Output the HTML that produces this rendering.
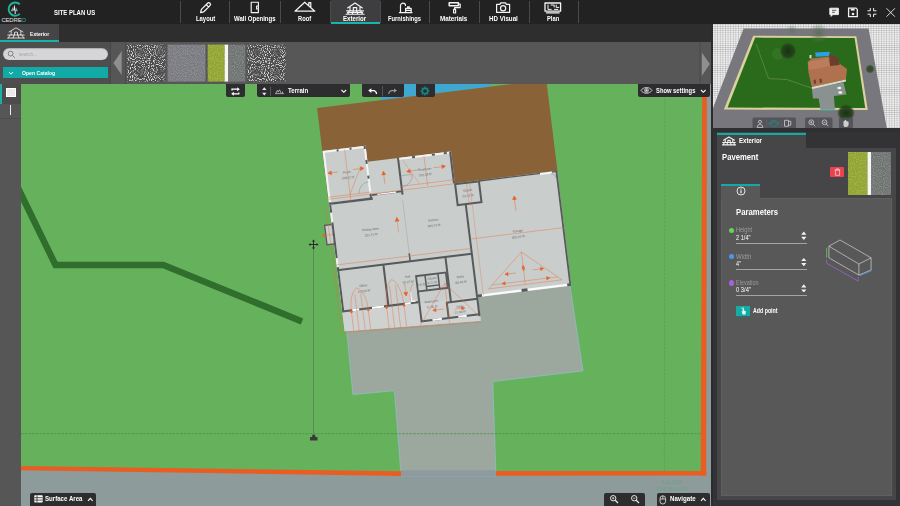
<!DOCTYPE html>
<html lang="en">
<head>
<meta charset="utf-8">
<title>Cedreo - Site Plan US</title>
<style>
html,body{margin:0;padding:0;}
body{width:900px;height:506px;overflow:hidden;background:#333;font-family:"Liberation Sans",sans-serif;color:#fff;position:relative;}
.abs{position:absolute;}
#topbar{left:0;top:0;width:900px;height:24px;background:#222222;}
#subbar{left:0;top:24px;width:713px;height:18px;background:#2e2e2e;}
#catbar{left:0;top:42px;width:713px;height:42px;background:#575757;}
#catleft{left:0;top:42px;width:110px;height:42px;background:#4e4e4e;}
.t{position:absolute;white-space:nowrap;font-weight:bold;line-height:1;}
.navtab{position:absolute;top:0;height:24px;width:50px;}
.navtab .lbl{position:absolute;left:-20px;right:-20px;top:14.5px;text-align:center;font-size:7.2px;font-weight:bold;line-height:8px;letter-spacing:-0.1px;}
.sep{position:absolute;top:1px;width:1px;height:22px;background:#4a4a4a;}
.btn{position:absolute;background:#2d2d2f;border-radius:2px;}
</style>
<style id="fit">
.t{transform-origin:0 0;}
#nav0{left:195.7px !important;letter-spacing:0 !important;transform:scaleX(0.807);}
#nav1{left:234.2px !important;letter-spacing:0 !important;transform:scaleX(0.823);}
#nav2{left:298.0px !important;letter-spacing:0 !important;transform:scaleX(0.794);}
#nav3{left:342.5px !important;letter-spacing:0 !important;transform:scaleX(0.841);}
#nav4{left:387.5px !important;letter-spacing:0 !important;transform:scaleX(0.790);}
#nav5{left:440.2px !important;letter-spacing:0 !important;transform:scaleX(0.863);}
#nav6{left:488.7px !important;letter-spacing:0 !important;transform:scaleX(0.849);}
#nav7{left:547.0px !important;letter-spacing:0 !important;transform:scaleX(0.791);}
#t1{left:54.2px !important;letter-spacing:0 !important;transform:scaleX(0.819);}
#t2{left:29.8px !important;letter-spacing:0 !important;transform:scaleX(0.834);}
#t3{left:18.8px !important;letter-spacing:0 !important;transform:scaleX(0.839);}
#t4{left:21.7px !important;letter-spacing:0 !important;transform:scaleX(0.851);}
#t5{left:287.6px !important;letter-spacing:0 !important;transform:scaleX(0.888);}
#t6{left:655.9px !important;letter-spacing:0 !important;transform:scaleX(0.869);}
#t7{left:45.0px !important;letter-spacing:0 !important;transform:scaleX(0.940);}
#t8{left:669.9px !important;letter-spacing:0 !important;transform:scaleX(0.903);}
#t9{left:28.0px !important;letter-spacing:0 !important;transform:scaleX(0.895);}
#t10{left:10.6px !important;letter-spacing:0 !important;transform:scaleX(0.838);}
#t11{left:25.0px !important;letter-spacing:0 !important;transform:scaleX(0.860);}
#t12{left:25.2px !important;letter-spacing:0 !important;transform:scaleX(0.879);}
#t13{left:25.2px !important;letter-spacing:0 !important;transform:scaleX(0.880);}
#t14{left:25.2px !important;letter-spacing:0 !important;transform:scaleX(0.956);}
#t15{left:25.2px !important;letter-spacing:0 !important;transform:scaleX(0.841);}
#t16{left:25.2px !important;letter-spacing:0 !important;transform:scaleX(0.876);}
#t17{left:25.2px !important;letter-spacing:0 !important;transform:scaleX(0.904);}
#t18{left:42.3px !important;letter-spacing:0 !important;transform:scaleX(0.808);}
</style>
</head>
<body>
<!-- ====== CANVAS (2D plan) ====== -->
<svg class="abs" id="canvas" style="left:0;top:84px" width="713" height="422" viewBox="0 84 713 422">
  <rect x="0" y="84" width="713" height="422" fill="#8d9b9b"/>
  <!-- lot -->
  <polygon points="20,84 704,84 702.5,473 496,473 401,473.5 20,468" fill="#66b25c"/>
  <!-- pool -->
  <polygon points="381,84 491,84 491,86.5 381,100.5" fill="#3fa8d2"/>
  <!-- dark hedge path -->
  <polyline points="18,188 55.5,265 163.3,265 302,321.4" fill="none" stroke="#2f6e2d" stroke-width="6.5" stroke-linejoin="miter"/>
  <!-- pavement -->
  <polygon points="346.4,328 479,312 478,290 569.6,283 583,370.9 492.8,381.6 496,476 401.1,476 394.4,390.7 352.9,394.6" fill="#9ca89d" stroke="#8fc3dc" stroke-width="0.6"/>
  <rect x="401.3" y="470.3" width="94.5" height="6" fill="#8e9aa0"/>
  <!-- dashed setback lines -->
  <line x1="21" y1="433.7" x2="703" y2="433.7" stroke="#4c8f47" stroke-width="0.8" stroke-dasharray="2.5,1.2"/>
  <line x1="665" y1="84" x2="664.3" y2="473" stroke="#58a153" stroke-width="0.9" stroke-dasharray="2.5,1.2"/>
  <!-- lot border (orange) -->
  <polygon points="20,466 401.2,471.3 401.2,476 20,470.3" fill="#e95d22"/>
  <polygon points="496,471 706.2,471 706.2,475.6 496,475.8" fill="#e95d22"/>
  <polygon points="702.2,84 706.9,84 706.2,475.6 700.7,475.6" fill="#e95d22"/>
  <!-- dimension line -->
  <line x1="313.5" y1="248" x2="313.5" y2="434" stroke="#4f7f4a" stroke-width="0.7"/>
  <g stroke="#2b2b2b" stroke-width="1" fill="#2b2b2b">
    <line x1="309.5" y1="244.5" x2="317.5" y2="244.5"/><line x1="313.5" y1="240.5" x2="313.5" y2="248.5"/>
    <path d="M308.5,244.5 l2,-1.6 v3.2z M318.5,244.5 l-2,-1.6 v3.2z M313.5,239.5 l-1.6,2 h3.2z M313.5,249.5 l-1.6,-2 h3.2z" stroke="none"/>
  </g>
  <path d="M310,440.5 h7.5 v-3.6 h-2.2 v-2.2 h-3.1 v2.2 h-2.2z" fill="#3a3a3a"/>
  <!-- lot label -->
  <text x="672" y="483.5" font-size="5.8" fill="#6fa085" text-anchor="middle" font-family="Liberation Sans, sans-serif">Lot 226</text>
  <text x="672" y="491" font-size="5.8" fill="#6fa085" text-anchor="middle" font-family="Liberation Sans, sans-serif">16608.04 ft²</text>

  <!-- HOUSE (rotated local frame) -->
  <g transform="translate(322.6,151.1) rotate(-7)">
    <rect x="-0.3" y="-43.4" width="231" height="92" fill="#8a6238"/>
    <!-- floors -->
    <path d="M0,0 H43.3 V16 H127.5 V48 H230.5 V164 H136.3 V187.6 L0,181.4 Z" fill="#c9cdcc"/>
    <path d="M0,163 H136.3 V187.6 L0,181.4 Z" fill="#cfd2d1"/>
    <!-- chimney -->
    <rect x="-7" y="74" width="7.5" height="19.5" fill="#c9cdcc" stroke="#5a5a5a" stroke-width="1.3"/>
    <!-- WALLS -->
    <g fill="none" stroke="#58595b" stroke-width="2">
      <!-- porch -->
      <path d="M1,1 H42.3 V53 H1 Z" stroke="#f4f4f4"/>
      <path d="M0,53.2 H44" stroke-width="2.4"/>
      <path d="M42.3,0 V3 M42.3,14 V18 M42.3,30 V33 M42.3,48 V54 M14,1 h2 M27,1 h2 M1,52 V54"/>
      <!-- hall top -->
      <path d="M43.3,49.6 H75" stroke-width="1.8"/>
      <path d="M49,49.6 H68" stroke="#f4f4f4" stroke-width="1.4"/>
      <!-- restroom -->
      <path d="M74,17 H126.5" stroke="#f4f4f4"/>
      <path d="M88,17 h3 M108,17 h3 M120,17 h3"/>
      <path d="M74,16 V53 M126.5,16 V48"/>
      <!-- closet -->
      <rect x="127.5" y="49" width="24" height="21"/>
      <!-- garage -->
      <path d="M151.5,48.7 H230.5" stroke-width="1.4"/>
      <path d="M213,49.2 H225" stroke="#f8f8f8" stroke-width="2"/>
      <path d="M229.6,48 V164" stroke-width="1.8"/>
      <path d="M135.6,70.5 V183"/>
      <path d="M134.6,162.6 H230.5" stroke="#fafafa" stroke-width="2.4"/>
      <path d="M134.6,162.6 H140.5 M180.5,162.6 H186.5 M226.5,162.6 H230.5" stroke-width="2.8"/>
      <!-- main left wall -->
      <path d="M1,54 V162" stroke="#f0f0f0"/>
      <path d="M1,54 V62 M1,72 V108 M1,117 V162"/>
      <!-- horizontal mid wall -->
      <path d="M0,120 H135.6"/>
      <!-- office / hall bottom -->
      <path d="M0,161.6 H76.5" stroke-width="2.2"/>
      <path d="M10,161.6 H17 M30,161.6 H42 M63,161.6 H69" stroke="#fafafa" stroke-width="2.2"/>
      <path d="M46.5,120 V162"/>
      <!-- closets block -->
      <path d="M77.5,135.5 H107.5 V151 H77.5 Z" stroke-width="1.8"/>
      <path d="M86.5,135.5 V151 M99.5,135.5 V151 M86.5,147 H99.5" stroke-width="1.5"/>
      <!-- bathroom -->
      <path d="M77.5,151 V182 M76.5,181 H135.6"/>
      <path d="M88.5,181 H98 M114.5,181 H123" stroke="#fafafa"/>
      <path d="M104.8,165.5 V182"/>
      <!-- entry -->
      <path d="M109,120 V166 M104,165.5 H135.6"/>
      <!-- kitchen/dining divider -->
      <path d="M73.5,58 V112" stroke="#a9adad" stroke-width="0.6"/>
      <path d="M73.5,112 V120" stroke-width="1.6"/>
      <path d="M70,150 v10 h4" stroke="#f4f4f4" stroke-width="1.5"/>
    </g>
    <!-- ORANGE roof overlay -->
    <g fill="none" stroke="#e86a35" stroke-width="0.6" stroke-opacity="0.65">
      <path d="M22,1 V54 M0,48.5 H127 M0,46.5 H43 M35,22 L22,46"/>
      <path d="M100,17 V47 M74,44.5 H127"/>
      <path d="M78,18 L92,44" stroke-opacity="0.5"/>
      <path d="M-0.5,114.7 H135 M136,105.3 H230"/>
      <path d="M-3,100 V182.6 L136,189"/>
      <path d="M-4,54 L-3,100" stroke-opacity="0.6"/>
      <path d="M185,124.4 L148,157 H222 Z M185,124.4 V157 M152,153.5 H218"/>
      <path d="M105,146 L75,186 M105,146 L134.5,182 M105,146 V186"/>
      <path d="M139,50 V70 M142,50 V163" stroke-opacity="0.5"/>
      <!-- office arches -->
      <path d="M9,162 V182 M14.5,162 V182.4 M20.5,162 V182.7 M26,162 V183 M44.5,162 V184 M50,162 V184.2 M56,162 V184.5 M62,162 V184.8"/>
      <path d="M9,162 C9,150 13,142 17,140 C22,142 26,150 26,162 M14.5,162 V146 M20.5,162 V146"/>
      <path d="M44.5,162 C44.5,150 48,138 53,136 C58,138 62,150 62,162 M50,162 V142 M56,162 V142"/>
      <path d="M69,160 C69,150 71,145 74,142"/>
      <path d="M-9,84 H0"/>
    </g>
    <g fill="#e8622a" stroke="#e8622a" stroke-width="0.7">
      <!-- arrows -->
      <path d="M2.6,22.6 l3.4,-1.8 v3.6z" /><path d="M6,22.6 H13" stroke-opacity="0.6"/>
      <path d="M38.8,22 l-3.4,-1.8 v3.6z"/><path d="M28,22 H35" stroke-opacity="0.6"/>
      <path d="M57.8,27.5 l-1.8,3.4 h3.6z"/><path d="M57.8,31 V40" stroke-opacity="0.6"/>
      <path d="M81,30.5 l3.4,-1.8 v3.6z"/><path d="M84,30.5 H92" stroke-opacity="0.6"/>
      <path d="M120,30 l-3.4,-1.8 v3.6z"/><path d="M108,30 H116" stroke-opacity="0.6"/>
      <path d="M65.5,75 l-1.9,3.6 h3.8z"/><path d="M65.5,79 V90" stroke-opacity="0.45"/>
      <path d="M184.6,68 l-1.8,3.4 h3.6z"/><path d="M184.6,71 V83" stroke-opacity="0.6"/>
      <path d="M185,143 l-1.2,-2 h2.4z M185,138 l-1.2,2 h2.4z" />
      <path d="M166,144.5 l3,-1.5 v3z"/><path d="M169,144.5 H177" stroke-opacity="0.6"/>
      <path d="M205,143.5 l-3,-1.5 v3z"/><path d="M194,143.5 H202" stroke-opacity="0.6"/>
      <path d="M162,153.5 l3,-1.5 v3z M210,153.5 l-3,-1.5 v3z"/>
      <path d="M65.3,154 l-1.9,-3.6 h3.8z"/><path d="M65.3,141 V150" stroke-opacity="0.6"/>
      <path d="M90,171.5 l3,-1.6 v3.2z"/><path d="M93,171.5 H101" stroke-opacity="0.6"/>
      <path d="M122,173 l-3,-1.6 v3.2z"/><path d="M112,173 H119" stroke-opacity="0.6"/>
      <circle cx="-9" cy="84" r="1.2"/>
      <circle cx="9" cy="163" r="1"/><circle cx="26" cy="163" r="1"/><circle cx="44.5" cy="163" r="1"/><circle cx="62" cy="163" r="1"/>
    </g>
    <!-- door arcs -->
    <g fill="none" stroke="#8a8e8e" stroke-width="0.5">
      <path d="M42,36 A11,11 0 0 0 31,47"/>
      <path d="M75,34 H86 A11,11 0 0 1 75,45"/>
      <path d="M224,50 A7,7 0 0 1 229,56"/>
    </g>
    <!-- room labels -->
    <g font-family="Liberation Sans, sans-serif" font-size="3.1" fill="#5f6363" text-anchor="middle">
      <text x="21.5" y="25">Porch</text><text x="22" y="30.5">108.11 ft²</text>
      <text x="99" y="31.5">Restroom</text><text x="99" y="37">102.18 ft²</text>
      <text x="139" y="57.5">Closet</text><text x="139" y="63">23.12 ft²</text>
      <text x="38" y="84.5">Dining room</text><text x="38" y="90">321.21 ft²</text>
      <text x="101.5" y="83">Kitchen</text><text x="101.5" y="88.5">303.73 ft²</text>
      <text x="184" y="104">Garage</text><text x="184" y="110">655.24 ft²</text>
      <text x="24" y="139.5">Office</text><text x="24" y="145">112.52 ft²</text>
      <text x="69" y="136">Hall</text><text x="69" y="141.5">97.27 ft²</text>
      <text x="93" y="140.5">Closet</text><text x="93" y="145">6.71 ft²</text>
      <text x="82" y="145.5">3.6 ft²</text>
      <text x="121.5" y="142.5">Entry</text><text x="121.5" y="148">83.46 ft²</text>
      <text x="89.5" y="163.5">Bathroom</text><text x="89.5" y="169">71.36 ft²</text>
      <text x="117" y="172">Toilet</text><text x="117" y="177.5">21.96 ft²</text>
    </g>
  </g>
</svg>
<!-- left tool strip -->
<div class="abs" style="left:0;top:84px;width:21px;height:422px;background:#565656;"></div>

<!-- ====== TOP BAR ====== -->
<div class="abs" id="topbar">
  <!-- logo -->
  <svg class="abs" style="left:0;top:0" width="30" height="24" viewBox="0 0 30 24">
    <path d="M19.8,4.3 A6.6,6.6 0 1 0 19.8,13.9" fill="none" stroke="#1db59a" stroke-width="1.9"/>
    <path d="M14.4,4.2 l1.3,6.3 v3.4 h-1 v-3.4 h-1.6 z M12.6,6.8 l-1.4,4.4 h1.4z M16.4,7.2 l1.2,4 h-1.2z" fill="#e8e8e8"/>
    <text x="13.7" y="22.3" font-size="5.9" fill="#e4e4e4" text-anchor="middle" font-family="Liberation Sans, sans-serif" letter-spacing="-0.1">CEDRE<tspan fill="#1db59a">O</tspan></text>
  </svg>
  <div class="t" id="t1" style="left:54px;top:9.3px;font-size:7.3px;letter-spacing:-0.25px;">SITE PLAN US</div>
  <!-- nav tabs -->
  <div class="sep" style="left:180px"></div><div class="sep" style="left:229px"></div><div class="sep" style="left:279.5px"></div>
  <div class="sep" style="left:329.5px"></div><div class="sep" style="left:379.5px"></div><div class="sep" style="left:429px"></div>
  <div class="sep" style="left:478.5px"></div><div class="sep" style="left:528.5px"></div><div class="sep" style="left:577.5px"></div>
  <div class="abs" style="left:330.5px;top:0;width:49px;height:24px;background:#3e3e40;border-bottom:2px solid #19b4ab;box-sizing:border-box;"></div>
  <div class="t" id="nav0" style="left:195.7px;top:15px;font-size:7.3px;">Layout</div>
  <div class="t" id="nav1" style="left:234.2px;top:15px;font-size:7.3px;">Wall Openings</div>
  <div class="t" id="nav2" style="left:298px;top:15px;font-size:7.3px;">Roof</div>
  <div class="t" id="nav3" style="left:342.5px;top:15px;font-size:7.3px;">Exterior</div>
  <div class="t" id="nav4" style="left:387.5px;top:15px;font-size:7.3px;">Furnishings</div>
  <div class="t" id="nav5" style="left:440.2px;top:15px;font-size:7.3px;">Materials</div>
  <div class="t" id="nav6" style="left:488.7px;top:15px;font-size:7.3px;">HD Visual</div>
  <div class="t" id="nav7" style="left:547px;top:15px;font-size:7.3px;">Plan</div>
  <svg class="abs" style="left:180px;top:0" width="400" height="24" viewBox="180 0 400 24" fill="none" stroke="#f4f4f4" stroke-width="1.25" stroke-linecap="round" stroke-linejoin="round">
    <!-- layout: pencil -->
    <path d="M200.6,12.6 l0.8,-3.2 l6.2,-6.2 a1.6,1.6 0 0 1 2.4,2.4 l-6.2,6.2 z M206.2,4.6 l2.4,2.4"/>
    <!-- wall openings: door -->
    <path d="M251.2,12.6 V2.2 h7.2 V12.6 Z M258.4,6 h-1.8 v3 h1.8" stroke-width="1.15"/>
    <!-- roof -->
    <path d="M295,11.2 L304.7,2.2 L314.8,11.2 Z M308.8,5 V2.6 h2 v4.2" stroke-width="1.2"/>
    <!-- exterior -->
    <path d="M347.6,8 L355,3 L362.4,8 M350,7 V10.6 M360,7 V10.6 M353.3,10.6 V7.6 h3.4 v3 M346.6,10.8 H363.4 M349.4,11 l-1.8,3 M353.2,11 l-0.9,3 M356.8,11 l0.9,3 M360.6,11 l1.8,3 M346,14.2 H364 M347.4,12.5 H362.6" stroke-width="1.15"/>
    <!-- furnishings -->
    <path d="M400.5,12.6 V5.6 a2.5,2.5 0 0 1 5,0 M399.4,12.6 H412 M405.6,12.6 V8.4 h5.6 V12.6 M405.6,10.4 H411 M407.6,8.4 v-1.6 h1.6 v1.6" stroke-width="1.2"/>
    <!-- materials: roller -->
    <path d="M449.2,2.8 h9.2 v3 h-9.2z" stroke-width="1.5"/><path d="M458.4,4.2 h1.8 v3.4 h-5.6 v1.8 M453.6,9.4 h2 v3.6 h-2z" stroke-width="1.2"/>
    <!-- hd visual: camera -->
    <path d="M496.6,4.4 h3.2 l0.9,-1.5 h4.8 l0.9,1.5 h3.2 v8 h-13z" stroke-width="1.2"/><circle cx="503.1" cy="8.3" r="2.6" stroke-width="1.2"/>
    <!-- plan -->
    <path d="M545,3 h15.6 v8.2 h-15.6z M546.4,12.8 h12.8" stroke-width="1.3"/><path d="M548,5 v4.4 h3.2 M551,5 h3.2 v2 M556.2,5 v2.4 h2.6 M554.5,9.4 h3.4" stroke-width="1"/>
  </svg>
  <!-- right icons -->
  <svg class="abs" style="left:825px;top:4px" width="75" height="17" viewBox="825 4 75 17" fill="none" stroke="#f2f2f2" stroke-width="0.9">
    <path d="M829.8,8.2 h8.6 v6.4 h-5.6 l-1.7,1.8 v-1.8 h-1.3z" fill="#f2f2f2"/>
    <path d="M832,10.3 h4.4 M832,12.3 h3" stroke="#222" stroke-width="0.7"/>
    <path d="M848.6,8.1 h7.4 l1.3,1.3 v7.3 h-8.7z" stroke-width="1.3"/><path d="M850.8,8.6 h3.8 v2 h-3.8z" fill="#f2f2f2" stroke="none"/><circle cx="853" cy="14" r="1.3" fill="#f2f2f2" stroke="none"/>
    <path d="M870.3,8 v2.8 h-2.8 M873.6,8 v2.8 h2.8 M870.3,17 v-2.8 h-2.8 M873.6,17 v-2.8 h2.8" stroke-width="1"/>
    <path d="M886.5,8.3 l8.4,8.4 M894.9,8.3 l-8.4,8.4" stroke-width="0.9"/>
  </svg>
</div>
<!-- ====== SUB BAR ====== -->
<div class="abs" id="subbar">
  <div class="abs" style="left:0;top:0;width:58.5px;height:18px;background:#454547;border-bottom:2px solid #17b1a8;box-sizing:border-box;"></div>
  <svg class="abs" style="left:7px;top:3px" width="18" height="12" viewBox="0 0 18 12" fill="none" stroke="#f2f2f2" stroke-width="0.8" stroke-linejoin="round" stroke-linecap="round">
    <path d="M2,5 L9,0.8 L16,5 M4.2,4.2 V8 M13.8,4.2 V8 M7.5,8 V5.2 h3 V8 M0.8,8 H17.2 M3,8 l-1.6,3 M7,8 l-0.8,3 M11,8 l0.8,3 M15,8 l1.6,3 M0.6,11 H17.4"/>
  </svg>
  <div class="t" id="t2" style="left:29.8px;top:6.6px;font-size:6.1px;letter-spacing:-0.2px;">Exterior</div>
</div>
<!-- ====== CATALOG BAR ====== -->
<div class="abs" id="catbar"></div>
<div class="abs" id="catleft">
  <div class="abs" style="left:3px;top:6px;width:105px;height:12.4px;border-radius:6.5px;background:#d6d6d8;box-shadow:inset 0 0.5px 1px rgba(0,0,0,.35);"></div>
  <svg class="abs" style="left:7px;top:8px" width="10" height="10" viewBox="0 0 10 10" fill="none" stroke="#777" stroke-width="0.9"><circle cx="3.6" cy="3.6" r="2.4"/><path d="M5.4,5.4 L7.8,7.8"/></svg>
  <div class="t" id="t3" style="left:19.5px;top:9.6px;font-size:5.6px;color:#a4a4a6;font-weight:normal;">search...</div>
  <div class="abs" style="left:3px;top:24.6px;width:105px;height:11.8px;background:#12aaa6;"></div>
  <svg class="abs" style="left:7.5px;top:28.5px" width="6" height="5" viewBox="0 0 6 5" fill="none" stroke="#fff" stroke-width="1"><path d="M1,1 L3,3.2 L5,1"/></svg>
  <div class="t" id="t4" style="left:21.2px;top:27.8px;font-size:6px;letter-spacing:-0.2px;">Open Catalog</div>
</div>
<div class="abs" style="left:110px;top:42px;width:1px;height:42px;background:#474747;"></div>
<div class="abs" style="left:111px;top:42px;width:14px;height:42px;background:#565656;"></div>
<div class="abs" style="left:125px;top:42px;width:1px;height:42px;background:#4a4a4a;"></div>
<svg class="abs" style="left:111px;top:42px" width="602" height="42" viewBox="111 42 602 42">
  <defs>
    <filter id="nz1" x="0" y="0" width="100%" height="100%"><feTurbulence type="fractalNoise" baseFrequency="0.95" numOctaves="1" seed="3"/><feColorMatrix type="matrix" values="0 0 0 0 0.68  0 0 0 0 0.685  0 0 0 0 0.67  5 0 0 0 -2.42"/><feGaussianBlur stdDeviation="0.45"/><feComposite in2="SourceGraphic" operator="in"/></filter>
    <filter id="nz2" x="0" y="0" width="100%" height="100%"><feTurbulence type="fractalNoise" baseFrequency="0.9" numOctaves="1" seed="8"/><feColorMatrix type="matrix" values="0 0 0 0 0.8  0 0 0 0 0.8  0 0 0 0 0.83  0.5 0.5 0 0 -0.42"/><feComposite in2="SourceGraphic" operator="in"/></filter>
    <filter id="nz3" x="0" y="0" width="100%" height="100%"><feTurbulence type="fractalNoise" baseFrequency="0.7" numOctaves="1" seed="5"/><feColorMatrix type="matrix" values="0 0 0 0 0.36  0 0 0 0 0.45  0 0 0 0 0.08  4 0 0 0 -1.7"/><feComposite in2="SourceGraphic" operator="in"/></filter>
    <g id="gravel"><rect width="38" height="37" fill="#494a49"/><rect width="38" height="37" fill="#bcbdbb" filter="url(#nz1)"/></g>
  </defs>
  <polygon points="113.4,63 121.7,51 121.7,75" fill="#8f8f8f"/>
  <use href="#gravel" x="127.3" y="44.6"/>
  <rect x="167.5" y="44.6" width="38" height="37" fill="#77777e"/><rect x="167.5" y="44.6" width="38" height="37" fill="#fff" filter="url(#nz2)"/>
  <rect x="207.7" y="44.6" width="17.1" height="37" fill="#91a42f"/><rect x="207.7" y="44.6" width="17.1" height="37" fill="#fff" filter="url(#nz3)"/>
  <rect x="224.7" y="44.6" width="3.6" height="37" fill="#f6f6f2"/>
  <rect x="228.3" y="44.6" width="17" height="37" fill="#6c716e"/><rect x="228.3" y="44.6" width="17" height="37" fill="#fff" filter="url(#nz2)"/>
  <use href="#gravel" x="247.5" y="44.6"/>
  <rect x="699.5" y="42" width="1" height="42" fill="#4a4a4a"/>
  <polygon points="709.8,64 701.8,52.5 701.8,76" fill="#8f8f8f"/>
</svg>

<!-- ====== CANVAS TOOLBARS ====== -->
<div class="abs" style="left:0;top:84px;width:2px;height:20px;background:#17b1a8;"></div>
<div class="abs" style="left:2px;top:84px;width:19px;height:20px;background:#4c4c4c;"></div>
<div class="abs" style="left:6px;top:88px;width:9.7px;height:9.4px;background:#e9e9e9;box-shadow:inset 0 0 0 1px #fff;"></div>
<div class="abs" style="left:9.6px;top:105px;width:1.8px;height:10px;background:#f0f0f0;"></div>
<div class="abs" style="left:0px;top:118px;width:21px;height:1px;background:#4d4d4d;"></div>

<div class="btn" style="left:225.5px;top:84px;width:19.5px;height:12.5px;border-radius:0 0 2px 2px;"></div>
<svg class="abs" style="left:230px;top:86.9px" width="11" height="9" viewBox="0 0 11 9" fill="none" stroke="#fff" stroke-width="1.3"><path d="M2,3.6 V2.2 H8.2 M8.8,5.4 V6.8 H2.8"/><path d="M7.2,0.2 L9.8,2.2 L7.2,4.2z M3.8,4.8 L1.2,6.8 L3.8,8.8z" fill="#fff" stroke="none"/></svg>

<div class="btn" style="left:257.3px;top:84px;width:92.7px;height:12.5px;border-radius:0 0 2px 2px;"></div>
<svg class="abs" style="left:260px;top:86px" width="92" height="11" viewBox="260 85 92 11">
  <path d="M264.3,86.2 l2.2,2.9 h-4.4z M264.3,94.6 l2.2,-2.9 h-4.4z" fill="#e6e6e6"/>
  <rect x="270.3" y="85.5" width="0.7" height="9.5" fill="#6a6a6a"/>
  <path d="M275,92.6 h9 M276,92 l1.3,-2.6 l1,1.6 l1.2,-2.2 l1.6,3.2 M282.5,92 v-1.5" fill="none" stroke="#d8d8d8" stroke-width="0.7"/>
  <path d="M341.5,89 l2.3,2.3 l2.3,-2.3" fill="none" stroke="#fff" stroke-width="1.1"/>
</svg>
<div class="t" id="t5" style="left:288px;top:88.1px;font-size:6.9px;letter-spacing:-0.2px;">Terrain</div>

<div class="btn" style="left:362px;top:84px;width:41.5px;height:12.5px;border-radius:0 0 2px 2px;"></div>
<svg class="abs" style="left:362px;top:85px" width="42" height="13" viewBox="362 84 42 13" fill="none">
  <rect x="382.3" y="85" width="0.7" height="10.5" fill="#666"/>
  <path d="M376.5,93 a3.2,3.2 0 0 0 -3.2,-3.4 h-2.4" stroke="#fff" stroke-width="1.3"/><path d="M368.2,89.6 l3.2,-2.4 v4.8z" fill="#fff"/>
  <path d="M388.8,93 a3.2,3.2 0 0 1 3.2,-3.4 h2.4" stroke="#9a9a9a" stroke-width="1.1"/><path d="M397,89.6 l-3,-2.2 v4.4z" fill="#9a9a9a"/>
</svg>
<div class="btn" style="left:416px;top:84px;width:19px;height:12.5px;border-radius:0 0 2px 2px;"></div>
<svg class="abs" style="left:420.4px;top:86.2px" width="10" height="10" viewBox="-5 -5 10 10"><circle r="2.7" fill="none" stroke="#17837e" stroke-width="1.7"/><g stroke="#17837e" stroke-width="1.5"><path d="M0,-4.4V-3 M0,4.4V3 M-4.4,0H-3 M4.4,0H3 M-3.1,-3.1L-2.2,-2.2 M3.1,3.1L2.2,2.2 M-3.1,3.1L-2.2,2.2 M3.1,-3.1L2.2,-2.2"/></g></svg>

<div class="btn" style="left:637.5px;top:84px;width:72px;height:13px;border-radius:0 0 2px 2px;"></div>
<svg class="abs" style="left:640px;top:86px" width="14" height="9" viewBox="0 0 14 9" fill="none" stroke="#ededed" stroke-width="0.8"><path d="M1,4.4 C3.5,0.6 9.5,0.6 12,4.4 C9.5,8.2 3.5,8.2 1,4.4z"/><circle cx="6.5" cy="4.4" r="1.9"/><circle cx="6.5" cy="4.4" r="0.7" fill="#ededed"/></svg>
<div class="t" id="t6" style="left:655.5px;top:87.6px;font-size:6.7px;letter-spacing:-0.25px;">Show settings</div>
<svg class="abs" style="left:699.5px;top:88.5px" width="7" height="5" viewBox="0 0 7 5" fill="none" stroke="#fff" stroke-width="1.1"><path d="M1,1 L3.3,3.3 L5.6,1"/></svg>

<!-- bottom buttons -->
<div class="btn" style="left:30px;top:492.5px;width:66px;height:14px;border-radius:2px 2px 0 0;"></div>
<svg class="abs" style="left:34px;top:495px" width="9" height="8" viewBox="0 0 9 8"><rect x="0.3" y="0.3" width="8.4" height="7.2" rx="0.8" fill="#fff"/><path d="M0.3,2.7 H8.7 M0.3,5.1 H8.7 M3,0.3 V7.5" stroke="#2d2d2f" stroke-width="0.8"/></svg>
<div class="t" id="t7" style="left:45.5px;top:496.2px;font-size:6.5px;letter-spacing:-0.25px;">Surface Area</div>
<svg class="abs" style="left:86.5px;top:497px" width="7" height="5" viewBox="0 0 7 5" fill="none" stroke="#fff" stroke-width="1.1"><path d="M1,3.8 L3.3,1.4 L5.6,3.8"/></svg>

<div class="btn" style="left:604px;top:492.5px;width:41px;height:14px;border-radius:2px 2px 0 0;"></div>
<svg class="abs" style="left:604px;top:493px" width="42" height="13" viewBox="604 493 42 13" fill="none" stroke="#e6e6e6" stroke-width="1">
  <circle cx="613.2" cy="498.2" r="2.7"/><path d="M615.2,500.2 L618,503" stroke-width="1.3"/><path d="M612,498.2 h2.4 M613.2,497 v2.4" stroke-width="0.7"/>
  <circle cx="634.2" cy="498.2" r="2.7"/><path d="M636.2,500.2 L639,503" stroke-width="1.3"/><path d="M633,498.2 h2.4" stroke-width="0.7"/>
</svg>
<div class="btn" style="left:656.5px;top:492.5px;width:53px;height:14px;border-radius:2px 2px 0 0;"></div>
<svg class="abs" style="left:659px;top:494.5px" width="8" height="10" viewBox="0 0 8 10" fill="none" stroke="#e6e6e6" stroke-width="0.8"><rect x="1" y="0.8" width="5.6" height="8.2" rx="2.8"/><path d="M3.8,0.8 V4 M1,4 H6.6"/></svg>
<div class="t" id="t8" style="left:668.5px;top:496px;font-size:6.8px;letter-spacing:-0.2px;">Navigate</div>
<svg class="abs" style="left:699.5px;top:497px" width="7" height="5" viewBox="0 0 7 5" fill="none" stroke="#fff" stroke-width="1.1"><path d="M1,3.8 L3.3,1.4 L5.6,3.8"/></svg>

<!-- ====== RIGHT PANEL ====== -->
<div class="abs" id="rightpanel" style="left:711px;top:24px;width:189px;height:482px;background:#333335;">
  <!-- 3D preview -->
  <svg class="abs" style="left:1.3px;top:0" width="188" height="104.6" viewBox="0 0 188 104.6">
    <defs>
      <pattern id="grid" width="2.6" height="2.1" patternUnits="userSpaceOnUse"><rect width="2.6" height="2.1" fill="#f0f0f0"/><path d="M0,0 H2.6 M0,0 V2.1" stroke="#8e8e8e" stroke-width="0.6"/></pattern>
      <radialGradient id="tr1"><stop offset="0" stop-color="#1a3212"/><stop offset="0.7" stop-color="#22401a" stop-opacity="0.9"/><stop offset="1" stop-color="#22401a" stop-opacity="0"/></radialGradient>
      <radialGradient id="tr2"><stop offset="0" stop-color="#5a6a55" stop-opacity="0.85"/><stop offset="1" stop-color="#6a7a66" stop-opacity="0"/></radialGradient>
    </defs>
    <rect width="188" height="105" fill="url(#grid)"/>
    <polygon points="31.6,4.6 156.6,4.6 175,105 -7,105" fill="#77777d"/>
    <polygon points="41.2,11.7 144.3,12.2 155.8,86 11.9,85.5" fill="#dbd19e"/>
    <polygon points="43.2,13.6 142.6,14.1 153.2,84 15.6,83.5" fill="#2a6a1b"/>
    <polyline points="44.1,19.9 56.6,54.6 74.8,55.5 99.8,64.2" fill="none" stroke="#7fa35c" stroke-width="0.5"/>
    <circle cx="66" cy="30" r="6" fill="#3b7a2c" opacity="0.6"/>
    <circle cx="76" cy="27" r="8.5" fill="url(#tr1)"/>
    <circle cx="106.5" cy="9" r="10" fill="url(#tr2)"/>
    <circle cx="80" cy="6" r="6" fill="url(#tr2)" opacity="0.6"/>
    <!-- pool -->
    <polygon points="103.2,28.5 117.5,27.8 118,31.9 103.7,32.8" fill="#2aa1e6"/>
    <!-- driveway -->
    <polygon points="99.8,64.2 131.6,58.5 134.4,70.5 121.9,72.1 123,85.8 108.5,85.8 106.6,74.4 101,74.4" fill="#8a9191"/>
    <ellipse cx="127.3" cy="64" rx="2" ry="1.3" fill="#f2f2f2"/><ellipse cx="128.3" cy="68.5" rx="2" ry="1.3" fill="#f2f2f2"/>
    <!-- house -->
    <polygon points="95.7,38 99.8,34.6 116.9,32.4 127.1,39.2 135,44.9 133.9,55.5 99.8,63 96.4,48.3" fill="#b0714f"/>
    <polygon points="116.9,30.1 126,33.5 127.6,41 118,42" fill="#6b3f2c"/>
    <polygon points="96,38 116,34 118,42 97,46" fill="#c08362" opacity="0.7"/>
    <polygon points="99.8,63 133.9,55.5 134,57.5 100.2,65" fill="#ded9cf"/>
    <path d="M101.5,56 l2.2,-0.4 l0.6,4 l-2.2,0.4z M107.3,55 l2.2,-0.4 l0.6,4 l-2.2,0.4z" fill="#6a4432"/>
    <rect x="97.5" y="31" width="2" height="3.4" fill="#d9d4c9"/>
    <circle cx="134" cy="89" r="9" fill="url(#tr1)"/>
    <circle cx="158" cy="45" r="4.5" fill="url(#tr1)" opacity="0.75"/>
    <line x1="108.5" y1="86.3" x2="123" y2="86.3" stroke="#2bb99b" stroke-width="0.8"/>
    <!-- preview toolbar -->
    <g fill="#505055" fill-opacity="0.88">
      <rect x="40.5" y="93.5" width="43.5" height="11" rx="1.5"/><rect x="93" y="93.5" width="27.5" height="11" rx="1.5"/><rect x="127" y="93.5" width="14" height="11" rx="1.5"/>
    </g>
    <g fill="none" stroke="#d2d2d2" stroke-width="0.8">
      <circle cx="48" cy="97.8" r="1.5"/><path d="M45.3,103 c0,-3.6 5.4,-3.6 5.4,0 M44.8,103.4 h6.4"/>
      <path d="M54.7,95.5 V103 M69.2,95.5 V103 M106.7,95.5 V103" stroke="#6d6d6d" stroke-width="0.5"/>
      <path d="M57.5,100.2 l4.5,-2.6 l4.5,2.6 l-4.5,2.6z M57.5,100.2 v-1.8 l4.5,-2.4 l4.5,2.4 v1.8" stroke="#1c8d87"/>
      <path d="M72.5,96.3 h4 v6 h-4z M76.5,97.3 h2.3 v3.8 h-2.3" />
      <circle cx="99.3" cy="98.3" r="2.4"/><path d="M101,100 l2.3,2.3 M98.2,98.3 h2.2 M99.3,97.2 v2.2"/>
      <circle cx="112.5" cy="98.3" r="2.4"/><path d="M114.2,100 l2.3,2.3 M111.4,98.3 h2.2"/>
      <path d="M131.5,99.5 v-2.3 a0.7,0.7 0 0 1 1.3,0 v-1 a0.7,0.7 0 0 1 1.3,0 v1 a0.7,0.7 0 0 1 1.3,0 v0.5 a0.7,0.7 0 0 1 1.2,0.3 v2.6 c0,1.6 -1,2.4 -2.6,2.4 c-1.6,0 -2.6,-1 -2.6,-2.6z" fill="#cfcfcf" stroke="none"/>
    </g>
  </svg>
  <!-- panel frame -->
  <div class="abs" style="left:0;top:0;width:2px;height:482px;background:#2c2c2e;"></div>
  <div class="abs" style="left:0;top:104px;width:189px;height:4px;background:#2f2f31;"></div>
  <div class="abs" style="left:5.5px;top:108px;width:179px;height:368px;background:#464648;"></div>
  <div class="abs" style="left:95px;top:108px;width:94px;height:16px;background:#333335;"></div>
  <!-- Exterior tab -->
  <div class="abs" style="left:5.5px;top:108.6px;width:89.5px;height:2.2px;background:#12aaa6;"></div>
  <svg class="abs" style="left:11px;top:111.8px" width="14" height="10" viewBox="0 0 18 12" fill="none" stroke="#f2f2f2" stroke-width="1.35" stroke-linejoin="round" stroke-linecap="round">
    <path d="M2,5 L9,0.8 L16,5 M4.2,4.2 V8 M13.8,4.2 V8 M7.5,8 V5.2 h3 V8 M0.8,8 H17.2 M3,8 l-1.6,3 M7,8 l-0.8,3 M11,8 l0.8,3 M15,8 l1.6,3 M0.6,11 H17.4"/>
  </svg>
  <div class="t" id="t9" style="left:28px;top:113.6px;font-size:6.8px;letter-spacing:-0.2px;">Exterior</div>
  <!-- Pavement header -->
  <div class="t" id="t10" style="left:10.5px;top:128.6px;font-size:9.2px;letter-spacing:-0.35px;">Pavement</div>
  <div class="abs" style="left:118.5px;top:143.3px;width:14.5px;height:10px;background:#e9434f;border-radius:1px;"></div>
  <svg class="abs" style="left:122.5px;top:144.3px" width="7" height="8" viewBox="0 0 7 8" fill="none" stroke="#ffd9dc" stroke-width="0.7"><path d="M1.4,2 h4.2 v5.3 h-4.2z M0.8,1.9 h5.4 M2.6,1.6 v-0.8 h1.8 v0.8"/></svg>
  <svg class="abs" style="left:137.3px;top:127.7px" width="43" height="43" viewBox="0 0 43 43">
    <rect width="19.6" height="43" fill="#91a42f"/><rect width="19.6" height="43" fill="#fff" filter="url(#nz3)"/>
    <rect x="19.5" width="3.8" height="43" fill="#f6f6f2"/>
    <rect x="23.3" width="19.7" height="43" fill="#6c716e"/><rect x="23.3" width="19.7" height="43" fill="#fff" filter="url(#nz2)"/>
  </svg>
  <!-- parameters panel -->
  <div class="abs" style="left:10px;top:173.5px;width:170.5px;height:298px;background:#585858;box-shadow:inset 0 0 0 0.6px #666;"></div>
  <div class="abs" style="left:10px;top:159.5px;width:39px;height:15px;background:#585858;border-top:2px solid #12aaa6;box-sizing:border-box;"></div>
  <svg class="abs" style="left:24.5px;top:162.2px" width="10" height="10" viewBox="0 0 10 10" fill="none" stroke="#f4f4f4" stroke-width="0.9"><circle cx="5" cy="5" r="4"/><path d="M5,4.3 V7.3" stroke-width="1.2"/><circle cx="5" cy="2.9" r="0.7" fill="#f4f4f4" stroke="none"/></svg>
  <div class="t" id="t11" style="left:25px;top:183.8px;font-size:9px;letter-spacing:-0.3px;">Parameters</div>
  <!-- fields -->
  <div class="abs" style="left:17.5px;top:203.7px;width:5.4px;height:5.4px;border-radius:3px;background:#62d84e;"></div>
  <div class="t" id="t12" style="left:25.2px;top:203.4px;font-size:6.3px;font-weight:normal;color:#9b9b9b;">Height</div>
  <div class="t" id="t13" style="left:25.2px;top:210.6px;font-size:6.4px;font-weight:normal;letter-spacing:-0.1px;">2 1/4"</div>
  <div class="abs" style="left:25.2px;top:218.5px;width:70.8px;height:0.9px;background:#a4a4a4;"></div>
  <div class="abs" style="left:17.5px;top:230px;width:5.4px;height:5.4px;border-radius:3px;background:#4b97ea;"></div>
  <div class="t" id="t14" style="left:25.2px;top:229.6px;font-size:6.3px;font-weight:normal;color:#9b9b9b;">Width</div>
  <div class="t" id="t15" style="left:25.2px;top:237px;font-size:6.4px;font-weight:normal;">4"</div>
  <div class="abs" style="left:25.2px;top:244.9px;width:70.8px;height:0.9px;background:#a4a4a4;"></div>
  <div class="abs" style="left:17.5px;top:256.2px;width:5.4px;height:5.4px;border-radius:3px;background:#a462d6;"></div>
  <div class="t" id="t16" style="left:25.2px;top:256px;font-size:6.3px;font-weight:normal;color:#9b9b9b;">Elevation</div>
  <div class="t" id="t17" style="left:25.2px;top:263.4px;font-size:6.4px;font-weight:normal;letter-spacing:-0.1px;">0 3/4"</div>
  <div class="abs" style="left:25.2px;top:271.1px;width:70.8px;height:0.9px;background:#a4a4a4;"></div>
  <svg class="abs" style="left:89px;top:206px" width="8" height="62" viewBox="0 0 8 62" fill="#f2f2f2">
    <path d="M3.8,1.6 l2.6,3.2 h-5.2z M3.8,10 l2.6,-3.2 h-5.2z M3.8,27.9 l2.6,3.2 h-5.2z M3.8,36.3 l2.6,-3.2 h-5.2z M3.8,54.2 l2.6,3.2 h-5.2z M3.8,62.6 l2.6,-3.2 h-5.2z"/>
  </svg>
  <!-- add point -->
  <div class="abs" style="left:25px;top:281.5px;width:14px;height:10px;background:#14ada6;box-shadow:0 0.7px 0 #0d7f7a;"></div>
  <svg class="abs" style="left:29px;top:282.7px" width="7" height="8" viewBox="0 0 7 8"><path d="M2.8,7.5 L1.6,4.6 l1,-0.3 V1.2 a0.6,0.6 0 0 1 1.2,0 V3.4 l1.9,0.5 v2.4 l-0.5,1.2z" fill="#e9fffd"/><path d="M0.8,0.8 l1,1 M2.2,0.3 v1" stroke="#e9fffd" stroke-width="0.5"/></svg>
  <div class="t" id="t18" style="left:42.3px;top:283.6px;font-size:6.5px;letter-spacing:-0.25px;">Add point</div>
  <!-- box diagram -->
  <svg class="abs" style="left:112px;top:213px" width="54" height="50" viewBox="823 237 54 50" fill="none" stroke-width="0.6">
    <g stroke="#e8e8e8">
      <path d="M828.9,246.2 L840,240 L871.1,257.8 L858.9,264 Z"/>
      <path d="M828.9,246.2 V257.8 L858.9,275.1 V264 M858.9,275.1 L871.1,270 V257.8"/>
    </g>
    <path d="M826.7,247.8 V257.8" stroke="#5fd64b" stroke-width="0.8"/>
    <path d="M826.7,259.6 V263.3 L858.2,281.1 V277" stroke="#a864da" stroke-width="0.7"/>
    <path d="M860,275.6 L871.6,270.7" stroke="#4b97ea" stroke-width="0.8"/>
  </svg>
</div>

</body>
</html>
